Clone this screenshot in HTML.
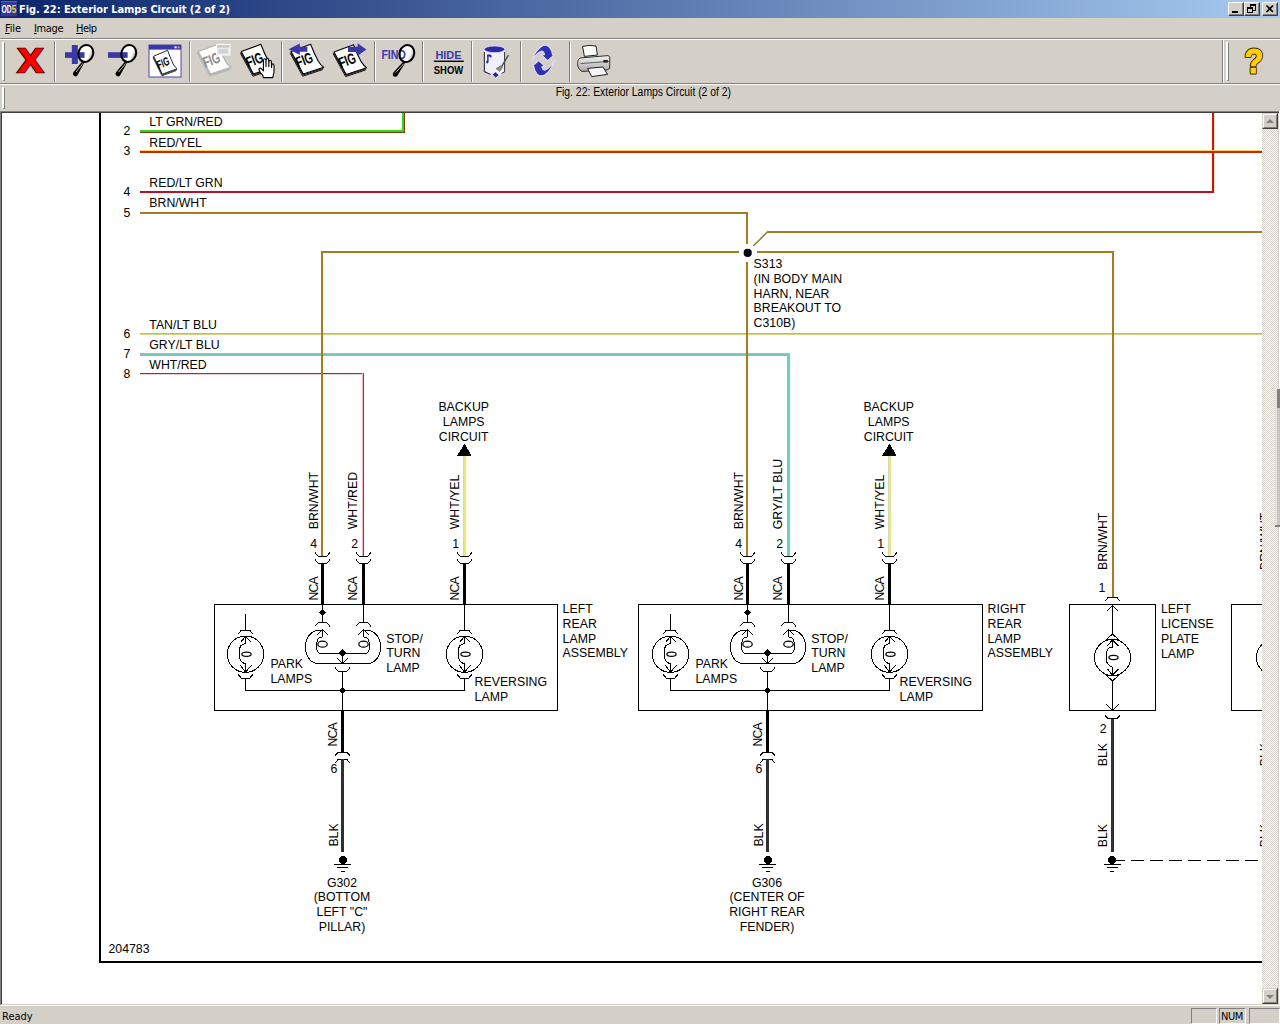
<!DOCTYPE html>
<html lang="en"><head><meta charset="utf-8">
<title>Fig. 22: Exterior Lamps Circuit (2 of 2)</title>
<style>
html,body{margin:0;padding:0;}
body{width:1280px;height:1024px;overflow:hidden;background:#d4d0c8;position:relative;
 font-family:"DejaVu Sans Condensed","DejaVu Sans","Liberation Sans",sans-serif;font-size:11px;color:#000;}
.abs{position:absolute;}
#title{left:0;top:0;width:1280px;height:18px;background:linear-gradient(to right,#0a246a 0%,#a6caf0 100%);}
#title .cap{position:absolute;left:19px;top:2px;height:16px;line-height:16px;color:#fff;font-weight:bold;font-size:11px;white-space:nowrap;letter-spacing:-0.08px;}
.tbtn{position:absolute;top:2px;width:16px;height:14px;background:#d4d0c8;box-sizing:border-box;
 border-top:1px solid #fff;border-left:1px solid #fff;border-right:1px solid #404040;border-bottom:1px solid #404040;}
.tbtn:after{content:"";position:absolute;left:0;top:0;right:0;bottom:0;border-right:1px solid #808080;border-bottom:1px solid #808080;}
#menu{left:0;top:18px;width:1280px;height:20px;}
#menu span{position:absolute;top:4px;letter-spacing:-0.15px;height:14px;line-height:14px;white-space:nowrap;}
#menu u{text-decoration:underline;text-underline-offset:1px;}
.hl{left:0;width:1280px;height:1px;}
.grip{width:3px;box-sizing:border-box;border-top:1px solid #fff;border-left:2px solid #fff;border-right:1px solid #808080;border-bottom:1px solid #808080;}
.sep{width:2px;top:41px;height:41px;box-sizing:border-box;border-left:1px solid #808080;border-right:1px solid #fff;}
#label2{left:0;top:85px;width:1286px;height:14px;line-height:14px;text-align:center;font-family:"Liberation Sans",sans-serif;font-size:12px;white-space:nowrap;}
#label2 span{display:inline-block;transform:scaleX(0.865);}
#content{left:2px;top:113px;width:1260px;height:891px;background:#fff;overflow:hidden;}
#vs{left:1262px;top:113px;width:16px;height:891px;
 background-color:#fff;
 background-image:linear-gradient(45deg,#d4d0c8 25%,transparent 25%,transparent 75%,#d4d0c8 75%),linear-gradient(45deg,#d4d0c8 25%,transparent 25%,transparent 75%,#d4d0c8 75%);
 background-size:2px 2px;background-position:0 0,1px 1px;}
.sbtn{position:absolute;left:0;width:16px;height:16px;background:#d4d0c8;box-sizing:border-box;
 border-top:1px solid #d4d0c8;border-left:1px solid #d4d0c8;border-right:1px solid #404040;border-bottom:1px solid #404040;}
.sbtn:before{content:"";position:absolute;left:0;top:0;right:0;bottom:0;border-top:1px solid #fff;border-left:1px solid #fff;border-right:1px solid #808080;border-bottom:1px solid #808080;}
.sbtn i{position:absolute;left:3px;width:0;height:0;border-left:4px solid transparent;border-right:4px solid transparent;}
#status{left:0;top:1006px;width:1280px;height:18px;}
.pane{position:absolute;top:2px;height:16px;box-sizing:border-box;border-top:1px solid #808080;border-left:1px solid #808080;border-right:1px solid #fff;border-bottom:1px solid #fff;}
svg text{font-family:"Liberation Sans",Arial,sans-serif;fill:#000;}
</style></head>
<body>
<!-- title bar -->
<div id="title" class="abs">
 <svg class="abs" style="left:1px;top:1px" width="16" height="16" viewBox="0 0 16 16"><rect width="16" height="16" fill="#37379a"/><rect x="0" y="0" width="16" height="1" fill="#5c5cc0"/><rect x="0" y="15" width="16" height="1" fill="#26267a"/><text x="0.4" y="12" font-size="10" font-weight="bold" style="fill:#fff" textLength="10.2" lengthAdjust="spacingAndGlyphs">OD</text><text x="10.8" y="12" font-size="10" font-weight="bold" style="fill:#f4d820" textLength="4.6" lengthAdjust="spacingAndGlyphs">5</text></svg>
 <div class="cap">Fig. 22: Exterior Lamps Circuit (2 of 2)</div>
 <div class="tbtn" style="left:1228px"><svg class="abs" style="left:0;top:0" width="14" height="12"><rect x="3" y="8" width="6" height="2" fill="#000"/></svg></div>
 <div class="tbtn" style="left:1244px"><svg class="abs" style="left:0;top:0" width="14" height="12"><rect x="5" y="1" width="6" height="2" fill="#000"/><path d="M5.5 2v3M10.5 2v5.5H8" stroke="#000" fill="none"/><rect x="2" y="4" width="6" height="2" fill="#000"/><rect x="2.5" y="5.5" width="5" height="4" fill="none" stroke="#000"/></svg></div>
 <div class="tbtn" style="left:1262px"><svg class="abs" style="left:0;top:0" width="14" height="12"><path d="M3.5 2.5l6.5 6.5M10 2.5l-6.5 6.5" stroke="#000" stroke-width="1.7" fill="none"/></svg></div>
</div>
<!-- menu -->
<div id="menu" class="abs"><span style="left:5px"><u>F</u>ile</span><span style="left:34px;letter-spacing:-0.35px"><u>I</u>mage</span><span style="left:76px;letter-spacing:-0.5px"><u>H</u>elp</span></div>
<div class="abs hl" style="top:38px;background:#808080"></div><div class="abs hl" style="top:39px;background:#fff"></div>
<!-- toolbar 1 -->
<div class="abs grip" style="left:2px;top:42px;height:39px"></div>
<div class="abs sep" style="left:54px"></div>
<div class="abs sep" style="left:189px"></div>
<div class="abs sep" style="left:281px"></div>
<div class="abs sep" style="left:374px"></div>
<div class="abs sep" style="left:422px"></div>
<div class="abs sep" style="left:471px"></div>
<div class="abs sep" style="left:520px"></div>
<div class="abs sep" style="left:569px"></div>
<div class="abs" style="left:1222px;top:40px;width:1px;height:43px;background:#808080"></div>
<div class="abs" style="left:1223px;top:40px;width:1px;height:43px;background:#fff"></div>
<div class="abs grip" style="left:1226px;top:42px;height:39px"></div>
<svg class="abs" style="left:0;top:40px" width="1280" height="44" viewBox="0 40 1280 44">
<defs><linearGradient id="lg" x1="0" y1="0" x2="1" y2="0"><stop offset="0" stop-color="#fff"/><stop offset="0.7" stop-color="#fff"/><stop offset="1" stop-color="#a8a8a8"/></linearGradient><linearGradient id="pg" x1="0" y1="0" x2="0" y2="1"><stop offset="0" stop-color="#f4f4f4"/><stop offset="1" stop-color="#a8a8a8"/></linearGradient></defs>
<text x="17.9" y="71.5" font-size="33.6" font-weight="bold" style="fill:#300000;stroke:#300000;stroke-width:2.6;stroke-linejoin:miter" textLength="24.8" lengthAdjust="spacingAndGlyphs">X</text>
<text x="17.9" y="71.5" font-size="33.6" font-weight="bold" style="fill:#ff0000;stroke:#ff0000;stroke-width:0.9;stroke-linejoin:miter" textLength="24.8" lengthAdjust="spacingAndGlyphs">X</text>
<ellipse cx="85.8" cy="53.4" rx="7.3" ry="8.6" transform="rotate(20 85.8 53.4)" fill="url(#lg)"/>
<rect x="65" y="52.2" width="19.5" height="5.7" fill="#3a38a8"/><rect x="71.8" y="45" width="6" height="19" fill="#3a38a8"/>
<path d="M82.6 61.0 L84.6 62.0 L77.19999999999999 75.8 Q75.1 77.4 73.0 74.8 Q72.6 73.2 74.0 71.60000000000001 Z" fill="#000"/>
<path d="M82.8 63.4 L75.89999999999999 72.2" stroke="#d0d0d0" stroke-width="0.9" fill="none"/>
<ellipse cx="85.8" cy="53.4" rx="7.3" ry="8.6" transform="rotate(20 85.8 53.4)" fill="none" stroke="#000" stroke-width="2"/>
<ellipse cx="128.7" cy="53.4" rx="7.3" ry="8.6" transform="rotate(20 128.7 53.4)" fill="url(#lg)"/>
<rect x="108" y="52.2" width="19.6" height="5.7" fill="#3a38a8"/>
<path d="M125.49999999999999 61.0 L127.49999999999999 62.0 L119.8 75.8 Q117.7 77.4 115.60000000000001 74.8 Q115.2 73.2 116.60000000000001 71.60000000000001 Z" fill="#000"/>
<path d="M125.69999999999999 63.4 L118.5 72.2" stroke="#d0d0d0" stroke-width="0.9" fill="none"/>
<ellipse cx="128.7" cy="53.4" rx="7.3" ry="8.6" transform="rotate(20 128.7 53.4)" fill="none" stroke="#000" stroke-width="2"/>
<rect x="149" y="45" width="32" height="32" fill="#fff" stroke="#4846ae" stroke-width="1"/><rect x="149" y="45" width="32" height="4.6" fill="#3a38a8"/><rect x="174.6" y="46.3" width="2" height="2" fill="#fff"/><rect x="177.6" y="46.3" width="2" height="2" fill="#f08090"/>
<g transform="translate(153.6 56.2) scale(0.72 0.8)">
<g transform="translate(0 0)">
<path d="M-0.9 1.6 L11.6 24.6 L31.6 18" fill="none" stroke="#000" stroke-width="0.9"/>
<path d="M-0.5 0.8 L12 23.4 L32.2 16.8" fill="none" stroke="#000" stroke-width="0.9"/>
<path d="M0 0 L19.5 -7.3 Q23.5 3 27.3 9.9 Q30 14 32.6 15.7 L12.2 22.4 Z" fill="#fff" stroke="#000" stroke-width="1.1" stroke-linejoin="round"/>
<text transform="translate(6.9 16.2) rotate(-20.5) scale(0.76 1.1)" font-size="13.6" font-weight="bold" style="fill:#000">FIG</text>
</g>
</g>
<g transform="translate(198.3 51.6)">
<path d="M-0.9 1.6 L11.6 24.6 L31.6 18" fill="none" stroke="#b0b0b0" stroke-width="0.9"/>
<path d="M-0.5 0.8 L12 23.4 L32.2 16.8" fill="none" stroke="#b0b0b0" stroke-width="0.9"/>
<path d="M0 0 L19.5 -7.3 Q23.5 3 27.3 9.9 Q30 14 32.6 15.7 L12.2 22.4 Z" fill="#fdfdfd" stroke="#b0b0b0" stroke-width="1.1" stroke-linejoin="round"/>
<text transform="translate(6.9 16.2) rotate(-20.5) scale(0.76 1.1)" font-size="13.6" font-weight="bold" style="fill:#8c8c8c">FIG</text>
</g>
<rect x="216.5" y="44.5" width="13.5" height="10.5" fill="#e8e8e8" stroke="#fff" stroke-width="1"/><rect x="217" y="45" width="12.5" height="2.6" fill="#c8c8c8"/><rect x="218.5" y="49" width="9.5" height="4.6" fill="#d4d4d4"/>
<g transform="translate(241.3 51.6)">
<path d="M-0.9 1.6 L11.6 24.6 L31.6 18" fill="none" stroke="#000" stroke-width="0.9"/>
<path d="M-0.5 0.8 L12 23.4 L32.2 16.8" fill="none" stroke="#000" stroke-width="0.9"/>
<path d="M0 0 L19.5 -7.3 Q23.5 3 27.3 9.9 Q30 14 32.6 15.7 L12.2 22.4 Z" fill="#fff" stroke="#000" stroke-width="1.1" stroke-linejoin="round"/>
<text transform="translate(6.9 16.2) rotate(-20.5) scale(0.76 1.1)" font-size="13.6" font-weight="bold" style="fill:#000">FIG</text>
</g>
<path d="M263.4 77.6 L262.8 75.4 L260.4 72.6 Q258.4 70 259.2 68.6 Q260.2 67.6 261.6 68.8 L263.4 70.8 L263.4 60.6 Q263.6 58.8 264.7 58.8 Q265.8 58.8 265.9 60.6 L266 66.4 L266.1 60 Q266.4 58.4 267.4 58.4 Q268.5 58.4 268.7 60 L268.8 66.6 L269 61.6 Q269.3 60.2 270.2 60.2 Q271.2 60.2 271.4 61.6 L271.5 67.6 L271.8 65 Q272.1 63.8 272.9 63.8 Q273.9 63.9 274 65.2 L274 72.4 L272.7 77.6 Z" fill="#fff" stroke="#000" stroke-width="1.1" stroke-linejoin="round"/>
<g transform="translate(291.1 51.6)">
<path d="M-0.9 1.6 L11.6 24.6 L31.6 18" fill="none" stroke="#000" stroke-width="0.9"/>
<path d="M-0.5 0.8 L12 23.4 L32.2 16.8" fill="none" stroke="#000" stroke-width="0.9"/>
<path d="M0 0 L19.5 -7.3 Q23.5 3 27.3 9.9 Q30 14 32.6 15.7 L12.2 22.4 Z" fill="#fff" stroke="#000" stroke-width="1.1" stroke-linejoin="round"/>
<text transform="translate(6.9 16.2) rotate(-20.5) scale(0.76 1.1)" font-size="13.6" font-weight="bold" style="fill:#000">FIG</text>
</g>
<path d="M288.6 49.3 L299.8 43.6 L299.8 46.8 L307.4 46.8 L307.4 51.7 L299.8 51.7 L299.8 55 Z" fill="#3a38a8"/>
<g transform="translate(334 52)">
<path d="M-0.9 1.6 L11.6 24.6 L31.6 18" fill="none" stroke="#000" stroke-width="0.9"/>
<path d="M-0.5 0.8 L12 23.4 L32.2 16.8" fill="none" stroke="#000" stroke-width="0.9"/>
<path d="M0 0 L19.5 -7.3 Q23.5 3 27.3 9.9 Q30 14 32.6 15.7 L12.2 22.4 Z" fill="#fff" stroke="#000" stroke-width="1.1" stroke-linejoin="round"/>
<text transform="translate(6.9 16.2) rotate(-20.5) scale(0.76 1.1)" font-size="13.6" font-weight="bold" style="fill:#000">FIG</text>
</g>
<path d="M366.4 49.6 L357.6 43.2 L357.6 46.8 L348 46.8 L348 52 L357.6 52 L357.6 55.8 Z" fill="#3a38a8"/>
<ellipse cx="406.8" cy="53.6" rx="7.3" ry="8.6" transform="rotate(20 406.8 53.6)" fill="url(#lg)"/>
<text x="381.4" y="58.8" font-size="12.2" font-weight="bold" style="fill:#3a38a8" textLength="24.6" lengthAdjust="spacingAndGlyphs">FIND</text>
<path d="M403.6 61.2 L405.6 62.2 L397.0 76.19999999999999 Q394.9 77.8 392.79999999999995 75.19999999999999 Q392.4 73.6 393.79999999999995 72.0 Z" fill="#000"/>
<path d="M403.8 63.6 L395.7 72.6" stroke="#d0d0d0" stroke-width="0.9" fill="none"/>
<ellipse cx="406.8" cy="53.6" rx="7.3" ry="8.6" transform="rotate(20 406.8 53.6)" fill="none" stroke="#000" stroke-width="2"/>
<text x="435.4" y="58.8" font-size="11.6" font-weight="bold" style="fill:#3a38a8" textLength="26" lengthAdjust="spacingAndGlyphs">HIDE</text>
<rect x="433.8" y="60.6" width="30" height="1.4" fill="#000"/>
<text x="433.8" y="73.5" font-size="11.4" font-weight="bold" textLength="29.4" lengthAdjust="spacingAndGlyphs">SHOW</text>
<path d="M484.3 50 L484.3 71.4 Q488 75.6 494.5 75.6 Q501 75.6 504.7 71.4 L504.7 50 Z" fill="#f0f0fb" stroke="none"/>
<path d="M484.4 52 L484.4 71.6 L490.6 74.4" fill="none" stroke="#303038" stroke-width="1.1"/>
<path d="M504.6 52 L504.6 71.8 L501.6 73.4" fill="none" stroke="#303038" stroke-width="1"/>
<ellipse cx="494.5" cy="49.3" rx="10.4" ry="3.4" fill="#2a2aa8" stroke="#dcdcf6" stroke-width="0.9"/>
<path d="M487 54.4 L490.4 54.4 Q492 55 491.6 57.4 L490 57.2 L489.6 56.4 L488.6 56.4 L488.6 61.4 Q488.4 63.6 487 63.4 Q485.8 63 486.2 61.4 Q486.6 60.4 487.2 60.2 Z" fill="#2a2aa8"/>
<path d="M508.4 55.2 L501.4 66.8" stroke="#505058" stroke-width="1.5" fill="none"/>
<path d="M501 65.6 L502.6 67.6 L499.6 71.4 L496 68.6 Z" fill="#8c8c84" stroke="#606060" stroke-width="0.5"/>
<path d="M495.5 71.8 L499.3 75.2 L495.5 78.2 L492 74.2 Z" fill="#2a2aa0" stroke="#f0f0fc" stroke-width="1"/>
<g transform="rotate(0 543.2 60.6)"><path d="M531.6 61.4 Q535 50.6 541.4 46.4 Q546.2 43.6 549.6 47.4 Q552.2 50.6 552.6 54.6 L554 55.2 L547.6 60.6 L541.4 55 L544.4 54.6 Q544.2 51.6 541.6 51 Q536.6 52.6 531.6 61.4 Z" fill="#3030b4" stroke="#dcdcf4" stroke-width="1.2" stroke-linejoin="round"/></g>
<g transform="rotate(180 543.2 60.6)"><path d="M531.6 61.4 Q535 50.6 541.4 46.4 Q546.2 43.6 549.6 47.4 Q552.2 50.6 552.6 54.6 L554 55.2 L547.6 60.6 L541.4 55 L544.4 54.6 Q544.2 51.6 541.6 51 Q536.6 52.6 531.6 61.4 Z" fill="#3030b4" stroke="#dcdcf4" stroke-width="1.2" stroke-linejoin="round"/></g>
<path d="M582.6 46.4 Q589 44.6 596 46 L597.4 55 L584.4 56.4 Z" fill="#fdfdfd" stroke="#202020" stroke-width="1"/>
<path d="M580 58 L608 55.6 Q610 56 609.8 58 L609.6 68.6 L607 70 L582 71.4 Q577.6 69 577.6 63.6 Q577.6 59.6 580 58 Z" fill="url(#pg)" stroke="#303030" stroke-width="1"/>
<path d="M580.4 63.6 L609.6 61.4" stroke="#505050" stroke-width="0.9" fill="none"/>
<rect x="603.4" y="60" width="4.4" height="2.6" fill="#202020"/>
<path d="M587.6 68.4 L603 67 L607.6 74.4 L591.6 76.6 Z" fill="#f4f4f4" stroke="#202020" stroke-width="1"/>
<text x="1244.6" y="72.7" font-size="34.6" font-weight="bold" style="fill:#3c2200;stroke:#3c2200;stroke-width:3.2;stroke-linejoin:round" textLength="18.8" lengthAdjust="spacingAndGlyphs">?</text>
<text x="1244.6" y="72.7" font-size="34.6" font-weight="bold" style="fill:#ffd200;stroke:#ffd200;stroke-width:1.1;stroke-linejoin:round" textLength="18.8" lengthAdjust="spacingAndGlyphs">?</text>
</svg>
<div class="abs hl" style="top:83px;background:#808080"></div><div class="abs hl" style="top:84px;background:#fff"></div>
<!-- toolbar 2 -->
<div class="abs grip" style="left:2px;top:87px;height:22px"></div>
<div id="label2" class="abs"><span>Fig. 22: Exterior Lamps Circuit (2 of 2)</span></div>
<!-- content border -->
<div class="abs" style="left:0;top:111px;width:1280px;height:1px;background:#808080"></div>
<div class="abs" style="left:1px;top:112px;width:1278px;height:1px;background:#404040"></div>
<div class="abs" style="left:0;top:111px;width:1px;height:894px;background:#808080"></div>
<div class="abs" style="left:1px;top:112px;width:1px;height:892px;background:#404040"></div>
<div class="abs" style="left:1278px;top:113px;width:1px;height:892px;background:#d4d0c8"></div>
<div class="abs" style="left:1279px;top:111px;width:1px;height:895px;background:#fff"></div>
<div class="abs" style="left:1px;top:1004px;width:1278px;height:1px;background:#d4d0c8"></div>
<div class="abs" style="left:0;top:1005px;width:1280px;height:1px;background:#fff"></div>
<div id="content" class="abs">
<svg width="1260" height="891" viewBox="2 113 1260 891" style="position:absolute;left:0;top:0" shape-rendering="crispEdges">
<rect x="99" y="113" width="2" height="850" fill="#000"/>
<rect x="99" y="961" width="1170" height="2" fill="#000"/>
<rect x="140" y="130" width="265" height="2" fill="#2ed81e"/>
<rect x="140" y="132" width="265" height="1" fill="#7a3c04"/>
<rect x="402" y="112" width="2" height="20" fill="#2ed81e"/>
<rect x="404" y="112" width="1" height="20" fill="#7a3c04"/>
<rect x="140" y="191" width="1074" height="2" fill="#b81226"/>
<rect x="1212" y="112" width="2" height="81" fill="#d80c0c"/>
<rect x="1214" y="112" width="1" height="81" fill="#b8f0c0"/>
<rect x="140" y="150" width="1122" height="1" fill="#ffd468"/>
<rect x="140" y="151" width="1122" height="2" fill="#c82606"/>
<rect x="140" y="212" width="608" height="2" fill="#a67c1e"/>
<rect x="321" y="251" width="793" height="2" fill="#a67c1e"/>
<path d="M753.4 246 L767.6 231.8" stroke="#8e7c34" stroke-width="1.5" fill="none" shape-rendering="geometricPrecision"/>
<rect x="767" y="231" width="495" height="2" fill="#a67c1e"/>
<rect x="140" y="333" width="1122" height="1" fill="#58dcd2"/>
<rect x="140" y="334" width="1122" height="1" fill="#cfd67e"/>
<rect x="140" y="353" width="650" height="1" fill="#66d6ca"/>
<rect x="140" y="354" width="650" height="1" fill="#7cc6c4"/>
<rect x="140" y="355" width="650" height="1" fill="#a2a8c0"/>
<rect x="787" y="353" width="1" height="203" fill="#8cc0c0"/>
<rect x="788" y="353" width="2" height="203" fill="#60d4c8"/>
<rect x="140" y="373" width="224" height="1" fill="#a82838"/>
<rect x="140" y="374" width="224" height="1" fill="#ecd0d8"/>
<rect x="362" y="373" width="1" height="183" fill="#ffb4bc"/>
<rect x="363" y="373" width="1" height="183" fill="#a42c3c"/>
<rect x="321" y="251" width="2" height="305" fill="#a67c1e"/>
<rect x="746" y="212" width="2" height="344" fill="#a67c1e"/>
<rect x="1112" y="251" width="2" height="346" fill="#a67c1e"/>
<circle cx="747.7" cy="252.9" r="9.2" fill="#fff"/>
<circle cx="747.7" cy="252.9" r="4.1" fill="#000014" shape-rendering="geometricPrecision"/>
<text x="123.5" y="135.2" font-size="12.3" text-anchor="start" >2</text>
<text x="123.5" y="155.3" font-size="12.3" text-anchor="start" >3</text>
<text x="123.5" y="196.3" font-size="12.3" text-anchor="start" >4</text>
<text x="123.5" y="216.6" font-size="12.3" text-anchor="start" >5</text>
<text x="123.5" y="338" font-size="12.3" text-anchor="start" >6</text>
<text x="123.5" y="358" font-size="12.3" text-anchor="start" >7</text>
<text x="123.5" y="378.2" font-size="12.3" text-anchor="start" >8</text>
<text x="149.3" y="125.5" font-size="12.3" text-anchor="start" >LT GRN/RED</text>
<text x="149.3" y="146.5" font-size="12.3" text-anchor="start" >RED/YEL</text>
<text x="149.3" y="186.6" font-size="12.3" text-anchor="start" >RED/LT GRN</text>
<text x="149.3" y="206.6" font-size="12.3" text-anchor="start" >BRN/WHT</text>
<text x="149.3" y="328.7" font-size="12.3" text-anchor="start" >TAN/LT BLU</text>
<text x="149.3" y="348.7" font-size="12.3" text-anchor="start" >GRY/LT BLU</text>
<text x="149.3" y="368.7" font-size="12.3" text-anchor="start" >WHT/RED</text>
<text x="753.6" y="268" font-size="12.3" text-anchor="start" >S313</text>
<text x="753.6" y="282.78" font-size="12.3" text-anchor="start" >(IN BODY MAIN</text>
<text x="753.6" y="297.56" font-size="12.3" text-anchor="start" >HARN, NEAR</text>
<text x="753.6" y="312.34" font-size="12.3" text-anchor="start" >BREAKOUT TO</text>
<text x="753.6" y="327.12" font-size="12.3" text-anchor="start" >C310B)</text>
<rect x="214.5" y="604.5" width="343" height="106" fill="none" stroke="#000"/>
<path d="M315.1 552.7 L318.3 556.3 L326.7 556.3 L329.9 552.7" stroke="#000" stroke-width="1" fill="none" />
<path d="M315.1 559.8 L318.3 563.4 L326.7 563.4 L329.9 559.8" stroke="#000" stroke-width="1" fill="none" />
<rect x="321" y="563.4" width="3" height="41" fill="#000"/>
<text transform="translate(317.5 600.6) rotate(-90)" font-size="12.3" letter-spacing="-0.8">NCA</text>
<text transform="translate(317.5 529.3) rotate(-90)" font-size="12.3">BRN/WHT</text>
<text x="317.2" y="547.5" font-size="12.3" text-anchor="end" >4</text>
<path d="M356.1 552.7 L359.3 556.3 L367.7 556.3 L370.9 552.7" stroke="#000" stroke-width="1" fill="none" />
<path d="M356.1 559.8 L359.3 563.4 L367.7 563.4 L370.9 559.8" stroke="#000" stroke-width="1" fill="none" />
<rect x="362" y="563.4" width="3" height="41" fill="#000"/>
<text transform="translate(357.3 600.6) rotate(-90)" font-size="12.3" letter-spacing="-0.8">NCA</text>
<text transform="translate(357.3 529.3) rotate(-90)" font-size="12.3">WHT/RED</text>
<text x="358.2" y="547.5" font-size="12.3" text-anchor="end" >2</text>
<path d="M457.1 552.7 L460.3 556.3 L468.7 556.3 L471.9 552.7" stroke="#000" stroke-width="1" fill="none" />
<path d="M457.1 559.8 L460.3 563.4 L468.7 563.4 L471.9 559.8" stroke="#000" stroke-width="1" fill="none" />
<rect x="463" y="563.4" width="3" height="41" fill="#000"/>
<text transform="translate(458.9 600.6) rotate(-90)" font-size="12.3" letter-spacing="-0.8">NCA</text>
<text transform="translate(458.9 529.3) rotate(-90)" font-size="12.3">WHT/YEL</text>
<text x="459.2" y="547.5" font-size="12.3" text-anchor="end" >1</text>
<rect x="463" y="455" width="1" height="101" fill="#d6d9b0"/>
<rect x="464" y="455" width="2" height="101" fill="#e6e982"/>
<rect x="466" y="455" width="1" height="101" fill="#fdfdd8"/>
<path d="M464.5 443.6 L471.5 455.5 L457.3 455.5 Z" fill="#000"/>
<text x="463.7" y="410.8" font-size="12.3" text-anchor="middle" >BACKUP</text>
<text x="463.7" y="425.7" font-size="12.3" text-anchor="middle" >LAMPS</text>
<text x="463.7" y="440.6" font-size="12.3" text-anchor="middle" >CIRCUIT</text>
<line x1="245.5" y1="614.2" x2="245.5" y2="630.3" stroke="#000" stroke-width="1" />
<circle cx="245.5" cy="654.2" r="18.2" fill="none" stroke="#000"/>
<path d="M240.5 642.5 L245.5 636.5 L251.3 642.5" stroke="#000" stroke-width="1" fill="none" />
<path d="M245.5 636.5 L245.5 643.8 C241.5 643.8 239.5 646.2 239.5 650.7 L239.5 656.7 C239.5 661.2 242 662.6 245.5 664 L245.5 672" stroke="#000" stroke-width="1" fill="none" />
<path d="M240.5 665.5 L245.5 672 L251.5 665.5" stroke="#000" stroke-width="1" fill="none" />
<ellipse cx="246.5" cy="654.2" rx="4.6" ry="2.1" fill="none" stroke="#000" stroke-width="1.25" shape-rendering="geometricPrecision"/>
<path d="M238.1 633.9 L241.3 630.3 L249.7 630.3 L252.9 633.9" stroke="#000" stroke-width="1" fill="none" />
<path d="M238.1 674.5 L241.3 678.1 L249.7 678.1 L252.9 674.5" stroke="#000" stroke-width="1" fill="none" />
<path d="M245.5 678.1 L245.5 690.4 L464.5 690.4 L464.5 678.1" stroke="#000" stroke-width="1" fill="none" />
<line x1="464.5" y1="604.5" x2="464.5" y2="630.3" stroke="#000" stroke-width="1" />
<circle cx="464.5" cy="654.2" r="18.2" fill="none" stroke="#000"/>
<path d="M459.5 642.5 L464.5 636.5 L470.3 642.5" stroke="#000" stroke-width="1" fill="none" />
<path d="M464.5 636.5 L464.5 643.8 C460.5 643.8 458.5 646.2 458.5 650.7 L458.5 656.7 C458.5 661.2 461 662.6 464.5 664 L464.5 672" stroke="#000" stroke-width="1" fill="none" />
<path d="M459.5 665.5 L464.5 672 L470.5 665.5" stroke="#000" stroke-width="1" fill="none" />
<ellipse cx="465.5" cy="654.2" rx="4.6" ry="2.1" fill="none" stroke="#000" stroke-width="1.25" shape-rendering="geometricPrecision"/>
<path d="M457.1 633.9 L460.3 630.3 L468.7 630.3 L471.9 633.9" stroke="#000" stroke-width="1" fill="none" />
<path d="M457.1 674.5 L460.3 678.1 L468.7 678.1 L471.9 674.5" stroke="#000" stroke-width="1" fill="none" />
<line x1="322.5" y1="604.5" x2="322.5" y2="622.6" stroke="#000" stroke-width="1" />
<path d="M319 612.8 L322.5 609.3 L326 612.8 L322.5 616.3 Z" fill="#000"/>
<line x1="363.5" y1="604.5" x2="363.5" y2="622.6" stroke="#000" stroke-width="1" />
<path d="M315.1 626.2 L318.3 622.6 L326.7 622.6 L329.9 626.2" stroke="#000" stroke-width="1" fill="none" />
<path d="M356.1 626.2 L359.3 622.6 L367.7 622.6 L370.9 626.2" stroke="#000" stroke-width="1" fill="none" />
<path d="M316.7 635.4 L322.5 629.3 L328.3 635.4" stroke="#000" stroke-width="1" fill="none" />
<path d="M357.7 635.4 L363.5 629.3 L369.3 635.4" stroke="#000" stroke-width="1" fill="none" />
<path d="M322.5 629.3 L322.5 637 Q316.9 637.5 316.9 642.5 L316.9 649 Q316.9 653.4 321.5 653.4 L342.5 653.4" stroke="#000" stroke-width="1" fill="none" />
<path d="M363.5 629.3 L363.5 637 Q369.1 637.5 369.1 642.5 L369.1 649 Q369.1 653.4 364.5 653.4 L342.5 653.4" stroke="#000" stroke-width="1" fill="none" />
<ellipse cx="322.5" cy="644.2" rx="4.7" ry="3" fill="none" stroke="#000" stroke-width="1.25" shape-rendering="geometricPrecision"/>
<ellipse cx="363.5" cy="644.2" rx="4.7" ry="3" fill="none" stroke="#000" stroke-width="1.25" shape-rendering="geometricPrecision"/>
<path d="M321 630 C310.5 630 305.3 638 305.3 647 C305.3 657 311.5 663.5 318.5 663.5 L367.5 663.5 C374.5 663.5 380.7 657 380.7 647 C380.7 638 375.5 630 365 630" stroke="#000" stroke-width="1" fill="none" />
<path d="M338.5 653.4 L342.5 649.4 L346.5 653.4 L342.5 657.4 Z" fill="#000"/>
<line x1="342.5" y1="653.4" x2="342.5" y2="663.5" stroke="#000" stroke-width="1" />
<path d="M336.9 658.2 L342.5 663.5 L348.1 658.2" stroke="#000" stroke-width="1" fill="none" />
<path d="M335.1 667.8 L338.3 671.4 L346.7 671.4 L349.9 667.8" stroke="#000" stroke-width="1" fill="none" />
<line x1="342.5" y1="671.4" x2="342.5" y2="710.5" stroke="#000" stroke-width="1" />
<path d="M338.7 690.5 L342.5 686.7 L346.3 690.5 L342.5 694.3 Z" fill="#000"/>
<rect x="341" y="710.5" width="3" height="41.5" fill="#000"/>
<path d="M335.1 755.6 L338.3 752 L346.7 752 L349.9 755.6" stroke="#000" stroke-width="1" fill="none" />
<path d="M335.1 762.9 L338.3 759.3 L346.7 759.3 L349.9 762.9" stroke="#000" stroke-width="1" fill="none" />
<rect x="341" y="759.3" width="3" height="92.7" fill="#303030"/>
<text transform="translate(337.4 746.6) rotate(-90)" font-size="12.3" letter-spacing="-0.8">NCA</text>
<text transform="translate(337.6 846.6) rotate(-90)" font-size="12.3">BLK</text>
<text x="330.6" y="772.6" font-size="12.3" text-anchor="start" >6</text>
<circle cx="343" cy="860" r="4.15" fill="#000"/>
<line x1="334" y1="864.5" x2="351" y2="864.5" stroke="#000" stroke-width="1" />
<line x1="337" y1="867.5" x2="348" y2="867.5" stroke="#000" stroke-width="1" />
<line x1="341" y1="871.5" x2="345" y2="871.5" stroke="#000" stroke-width="1" />
<text x="342" y="886.5" font-size="12.3" text-anchor="middle" >G302</text>
<text x="342" y="901.2" font-size="12.3" text-anchor="middle" >(BOTTOM</text>
<text x="342" y="915.9" font-size="12.3" text-anchor="middle" >LEFT &quot;C&quot;</text>
<text x="342" y="930.6" font-size="12.3" text-anchor="middle" >PILLAR)</text>
<text x="270.5" y="667.5" font-size="12.3" text-anchor="start" >PARK</text>
<text x="270.5" y="682.5" font-size="12.3" text-anchor="start" >LAMPS</text>
<text x="386.3" y="642.5" font-size="12.3" text-anchor="start" >STOP/</text>
<text x="386.3" y="657.3" font-size="12.3" text-anchor="start" >TURN</text>
<text x="386.3" y="672" font-size="12.3" text-anchor="start" >LAMP</text>
<text x="474.6" y="686.2" font-size="12.3" text-anchor="start" >REVERSING</text>
<text x="474.6" y="701.4" font-size="12.3" text-anchor="start" >LAMP</text>
<rect x="638.5" y="604.5" width="344" height="106" fill="none" stroke="#000"/>
<path d="M740.1 552.7 L743.3 556.3 L751.7 556.3 L754.9 552.7" stroke="#000" stroke-width="1" fill="none" />
<path d="M740.1 559.8 L743.3 563.4 L751.7 563.4 L754.9 559.8" stroke="#000" stroke-width="1" fill="none" />
<rect x="746" y="563.4" width="3" height="41" fill="#000"/>
<text transform="translate(742.5 600.6) rotate(-90)" font-size="12.3" letter-spacing="-0.8">NCA</text>
<text transform="translate(742.5 529.3) rotate(-90)" font-size="12.3">BRN/WHT</text>
<text x="742.2" y="547.5" font-size="12.3" text-anchor="end" >4</text>
<path d="M781.1 552.7 L784.3 556.3 L792.7 556.3 L795.9 552.7" stroke="#000" stroke-width="1" fill="none" />
<path d="M781.1 559.8 L784.3 563.4 L792.7 563.4 L795.9 559.8" stroke="#000" stroke-width="1" fill="none" />
<rect x="787" y="563.4" width="3" height="41" fill="#000"/>
<text transform="translate(782.3 600.6) rotate(-90)" font-size="12.3" letter-spacing="-0.8">NCA</text>
<text transform="translate(782.3 529.3) rotate(-90)" font-size="12.3">GRY/LT BLU</text>
<text x="783.2" y="547.5" font-size="12.3" text-anchor="end" >2</text>
<path d="M882.1 552.7 L885.3 556.3 L893.7 556.3 L896.9 552.7" stroke="#000" stroke-width="1" fill="none" />
<path d="M882.1 559.8 L885.3 563.4 L893.7 563.4 L896.9 559.8" stroke="#000" stroke-width="1" fill="none" />
<rect x="888" y="563.4" width="3" height="41" fill="#000"/>
<text transform="translate(883.9 600.6) rotate(-90)" font-size="12.3" letter-spacing="-0.8">NCA</text>
<text transform="translate(883.9 529.3) rotate(-90)" font-size="12.3">WHT/YEL</text>
<text x="884.2" y="547.5" font-size="12.3" text-anchor="end" >1</text>
<rect x="888" y="455" width="1" height="101" fill="#d6d9b0"/>
<rect x="889" y="455" width="2" height="101" fill="#e6e982"/>
<rect x="891" y="455" width="1" height="101" fill="#fdfdd8"/>
<path d="M889.5 443.6 L896.5 455.5 L882.3 455.5 Z" fill="#000"/>
<text x="888.7" y="410.8" font-size="12.3" text-anchor="middle" >BACKUP</text>
<text x="888.7" y="425.7" font-size="12.3" text-anchor="middle" >LAMPS</text>
<text x="888.7" y="440.6" font-size="12.3" text-anchor="middle" >CIRCUIT</text>
<line x1="670.5" y1="614.2" x2="670.5" y2="630.3" stroke="#000" stroke-width="1" />
<circle cx="670.5" cy="654.2" r="18.2" fill="none" stroke="#000"/>
<path d="M665.5 642.5 L670.5 636.5 L676.3 642.5" stroke="#000" stroke-width="1" fill="none" />
<path d="M670.5 636.5 L670.5 643.8 C666.5 643.8 664.5 646.2 664.5 650.7 L664.5 656.7 C664.5 661.2 667 662.6 670.5 664 L670.5 672" stroke="#000" stroke-width="1" fill="none" />
<path d="M665.5 665.5 L670.5 672 L676.5 665.5" stroke="#000" stroke-width="1" fill="none" />
<ellipse cx="671.5" cy="654.2" rx="4.6" ry="2.1" fill="none" stroke="#000" stroke-width="1.25" shape-rendering="geometricPrecision"/>
<path d="M663.1 633.9 L666.3 630.3 L674.7 630.3 L677.9 633.9" stroke="#000" stroke-width="1" fill="none" />
<path d="M663.1 674.5 L666.3 678.1 L674.7 678.1 L677.9 674.5" stroke="#000" stroke-width="1" fill="none" />
<path d="M670.5 678.1 L670.5 690.4 L889.5 690.4 L889.5 678.1" stroke="#000" stroke-width="1" fill="none" />
<line x1="889.5" y1="604.5" x2="889.5" y2="630.3" stroke="#000" stroke-width="1" />
<circle cx="889.5" cy="654.2" r="18.2" fill="none" stroke="#000"/>
<path d="M884.5 642.5 L889.5 636.5 L895.3 642.5" stroke="#000" stroke-width="1" fill="none" />
<path d="M889.5 636.5 L889.5 643.8 C885.5 643.8 883.5 646.2 883.5 650.7 L883.5 656.7 C883.5 661.2 886 662.6 889.5 664 L889.5 672" stroke="#000" stroke-width="1" fill="none" />
<path d="M884.5 665.5 L889.5 672 L895.5 665.5" stroke="#000" stroke-width="1" fill="none" />
<ellipse cx="890.5" cy="654.2" rx="4.6" ry="2.1" fill="none" stroke="#000" stroke-width="1.25" shape-rendering="geometricPrecision"/>
<path d="M882.1 633.9 L885.3 630.3 L893.7 630.3 L896.9 633.9" stroke="#000" stroke-width="1" fill="none" />
<path d="M882.1 674.5 L885.3 678.1 L893.7 678.1 L896.9 674.5" stroke="#000" stroke-width="1" fill="none" />
<line x1="747.5" y1="604.5" x2="747.5" y2="622.6" stroke="#000" stroke-width="1" />
<path d="M744 612.8 L747.5 609.3 L751 612.8 L747.5 616.3 Z" fill="#000"/>
<line x1="788.5" y1="604.5" x2="788.5" y2="622.6" stroke="#000" stroke-width="1" />
<path d="M740.1 626.2 L743.3 622.6 L751.7 622.6 L754.9 626.2" stroke="#000" stroke-width="1" fill="none" />
<path d="M781.1 626.2 L784.3 622.6 L792.7 622.6 L795.9 626.2" stroke="#000" stroke-width="1" fill="none" />
<path d="M741.7 635.4 L747.5 629.3 L753.3 635.4" stroke="#000" stroke-width="1" fill="none" />
<path d="M782.7 635.4 L788.5 629.3 L794.3 635.4" stroke="#000" stroke-width="1" fill="none" />
<path d="M747.5 629.3 L747.5 637 Q741.9 637.5 741.9 642.5 L741.9 649 Q741.9 653.4 746.5 653.4 L767.5 653.4" stroke="#000" stroke-width="1" fill="none" />
<path d="M788.5 629.3 L788.5 637 Q794.1 637.5 794.1 642.5 L794.1 649 Q794.1 653.4 789.5 653.4 L767.5 653.4" stroke="#000" stroke-width="1" fill="none" />
<ellipse cx="747.5" cy="644.2" rx="4.7" ry="3" fill="none" stroke="#000" stroke-width="1.25" shape-rendering="geometricPrecision"/>
<ellipse cx="788.5" cy="644.2" rx="4.7" ry="3" fill="none" stroke="#000" stroke-width="1.25" shape-rendering="geometricPrecision"/>
<path d="M746 630 C735.5 630 730.3 638 730.3 647 C730.3 657 736.5 663.5 743.5 663.5 L792.5 663.5 C799.5 663.5 805.7 657 805.7 647 C805.7 638 800.5 630 790 630" stroke="#000" stroke-width="1" fill="none" />
<path d="M763.5 653.4 L767.5 649.4 L771.5 653.4 L767.5 657.4 Z" fill="#000"/>
<line x1="767.5" y1="653.4" x2="767.5" y2="663.5" stroke="#000" stroke-width="1" />
<path d="M761.9 658.2 L767.5 663.5 L773.1 658.2" stroke="#000" stroke-width="1" fill="none" />
<path d="M760.1 667.8 L763.3 671.4 L771.7 671.4 L774.9 667.8" stroke="#000" stroke-width="1" fill="none" />
<line x1="767.5" y1="671.4" x2="767.5" y2="710.5" stroke="#000" stroke-width="1" />
<path d="M763.7 690.5 L767.5 686.7 L771.3 690.5 L767.5 694.3 Z" fill="#000"/>
<rect x="766" y="710.5" width="3" height="41.5" fill="#000"/>
<path d="M760.1 755.6 L763.3 752 L771.7 752 L774.9 755.6" stroke="#000" stroke-width="1" fill="none" />
<path d="M760.1 762.9 L763.3 759.3 L771.7 759.3 L774.9 762.9" stroke="#000" stroke-width="1" fill="none" />
<rect x="766" y="759.3" width="3" height="92.7" fill="#303030"/>
<text transform="translate(762.4 746.6) rotate(-90)" font-size="12.3" letter-spacing="-0.8">NCA</text>
<text transform="translate(762.6 846.6) rotate(-90)" font-size="12.3">BLK</text>
<text x="755.6" y="772.6" font-size="12.3" text-anchor="start" >6</text>
<circle cx="768" cy="860" r="4.15" fill="#000"/>
<line x1="759" y1="864.5" x2="776" y2="864.5" stroke="#000" stroke-width="1" />
<line x1="762" y1="867.5" x2="773" y2="867.5" stroke="#000" stroke-width="1" />
<line x1="766" y1="871.5" x2="770" y2="871.5" stroke="#000" stroke-width="1" />
<text x="767" y="886.5" font-size="12.3" text-anchor="middle" >G306</text>
<text x="767" y="901.2" font-size="12.3" text-anchor="middle" >(CENTER OF</text>
<text x="767" y="915.9" font-size="12.3" text-anchor="middle" >RIGHT REAR</text>
<text x="767" y="930.6" font-size="12.3" text-anchor="middle" >FENDER)</text>
<text x="695.5" y="667.5" font-size="12.3" text-anchor="start" >PARK</text>
<text x="695.5" y="682.5" font-size="12.3" text-anchor="start" >LAMPS</text>
<text x="811.3" y="642.5" font-size="12.3" text-anchor="start" >STOP/</text>
<text x="811.3" y="657.3" font-size="12.3" text-anchor="start" >TURN</text>
<text x="811.3" y="672" font-size="12.3" text-anchor="start" >LAMP</text>
<text x="899.6" y="686.2" font-size="12.3" text-anchor="start" >REVERSING</text>
<text x="899.6" y="701.4" font-size="12.3" text-anchor="start" >LAMP</text>
<text x="562.6" y="613.4" font-size="12.3" text-anchor="start" >LEFT</text>
<text x="562.6" y="628" font-size="12.3" text-anchor="start" >REAR</text>
<text x="562.6" y="642.6" font-size="12.3" text-anchor="start" >LAMP</text>
<text x="562.6" y="657.2" font-size="12.3" text-anchor="start" >ASSEMBLY</text>
<text x="987.6" y="613.4" font-size="12.3" text-anchor="start" >RIGHT</text>
<text x="987.6" y="628" font-size="12.3" text-anchor="start" >REAR</text>
<text x="987.6" y="642.6" font-size="12.3" text-anchor="start" >LAMP</text>
<text x="987.6" y="657.2" font-size="12.3" text-anchor="start" >ASSEMBLY</text>
<rect x="1069.5" y="604.5" width="85.5" height="106" fill="none" stroke="#000"/>
<path d="M1105.1 600.9 L1108.3 597.3 L1116.7 597.3 L1119.9 600.9" stroke="#000" stroke-width="1" fill="none" />
<text x="1105.3" y="591.6" font-size="12.3" text-anchor="end" >1</text>
<text transform="translate(1106.8 570) rotate(-90)" font-size="12.3">BRN/WHT</text>
<path d="M1106.5 611.5 L1112.5 605.3 L1118.5 611.5" stroke="#000" stroke-width="1" fill="none" />
<line x1="1112.5" y1="605.3" x2="1112.5" y2="634.2" stroke="#000" stroke-width="1" />
<path d="M1106.5 639.5 L1112.5 634 L1118.5 639.5 Z" stroke="#000" stroke-width="1" fill="none" />
<circle cx="1112.5" cy="657.5" r="18" fill="none" stroke="#000"/>
<path d="M1107.5 645.8 L1112.5 639.8 L1118.3 645.8" stroke="#000" stroke-width="1" fill="none" />
<path d="M1112.5 639.8 L1112.5 647.1 C1108.5 647.1 1106.5 649.5 1106.5 654 L1106.5 660 C1106.5 664.5 1109 665.9 1112.5 667.3 L1112.5 675.3" stroke="#000" stroke-width="1" fill="none" />
<path d="M1107.5 668.8 L1112.5 675.3 L1118.5 668.8" stroke="#000" stroke-width="1" fill="none" />
<ellipse cx="1113.5" cy="657.5" rx="4.6" ry="2.1" fill="none" stroke="#000" stroke-width="1.25" shape-rendering="geometricPrecision"/>
<path d="M1106.5 675.5 L1118.5 675.5 L1112.5 681 Z" stroke="#000" stroke-width="1" fill="none" />
<line x1="1112.5" y1="681.2" x2="1112.5" y2="710.3" stroke="#000" stroke-width="1" />
<path d="M1106.5 704.4 L1112.5 710.3 L1118.5 704.4" stroke="#000" stroke-width="1" fill="none" />
<path d="M1105.1 715.6 L1108.3 718.6 L1116.7 718.6 L1119.9 715.6" stroke="#000" stroke-width="1" fill="none" />
<rect x="1110.9" y="718.6" width="3" height="133.4" fill="#303030"/>
<text x="1106.7" y="732.8" font-size="12.3" text-anchor="end" >2</text>
<text transform="translate(1107.2 766.2) rotate(-90)" font-size="12.3">BLK</text>
<text transform="translate(1107.2 847.3) rotate(-90)" font-size="12.3">BLK</text>
<rect x="1231.5" y="604.5" width="85.5" height="106" fill="none" stroke="#000"/>
<path d="M1267.1 600.9 L1270.3 597.3 L1278.7 597.3 L1281.9 600.9" stroke="#000" stroke-width="1" fill="none" />
<text transform="translate(1268.8 570) rotate(-90)" font-size="12.3">BRN/WHT</text>
<path d="M1268.5 611.5 L1274.5 605.3 L1280.5 611.5" stroke="#000" stroke-width="1" fill="none" />
<line x1="1274.5" y1="605.3" x2="1274.5" y2="634.2" stroke="#000" stroke-width="1" />
<path d="M1268.5 639.5 L1274.5 634 L1280.5 639.5 Z" stroke="#000" stroke-width="1" fill="none" />
<circle cx="1274.5" cy="657.5" r="18" fill="none" stroke="#000"/>
<path d="M1269.5 645.8 L1274.5 639.8 L1280.3 645.8" stroke="#000" stroke-width="1" fill="none" />
<path d="M1274.5 639.8 L1274.5 647.1 C1270.5 647.1 1268.5 649.5 1268.5 654 L1268.5 660 C1268.5 664.5 1271 665.9 1274.5 667.3 L1274.5 675.3" stroke="#000" stroke-width="1" fill="none" />
<path d="M1269.5 668.8 L1274.5 675.3 L1280.5 668.8" stroke="#000" stroke-width="1" fill="none" />
<ellipse cx="1275.5" cy="657.5" rx="4.6" ry="2.1" fill="none" stroke="#000" stroke-width="1.25" shape-rendering="geometricPrecision"/>
<path d="M1268.5 675.5 L1280.5 675.5 L1274.5 681 Z" stroke="#000" stroke-width="1" fill="none" />
<line x1="1274.5" y1="681.2" x2="1274.5" y2="710.3" stroke="#000" stroke-width="1" />
<path d="M1268.5 704.4 L1274.5 710.3 L1280.5 704.4" stroke="#000" stroke-width="1" fill="none" />
<path d="M1267.1 715.6 L1270.3 718.6 L1278.7 718.6 L1281.9 715.6" stroke="#000" stroke-width="1" fill="none" />
<rect x="1272.9" y="718.6" width="3" height="133.4" fill="#303030"/>
<text transform="translate(1269.2 766.2) rotate(-90)" font-size="12.3">BLK</text>
<text transform="translate(1269.2 847.3) rotate(-90)" font-size="12.3">BLK</text>
<text x="1161" y="613.2" font-size="12.3" text-anchor="start" >LEFT</text>
<text x="1161" y="628" font-size="12.3" text-anchor="start" >LICENSE</text>
<text x="1161" y="642.8" font-size="12.3" text-anchor="start" >PLATE</text>
<text x="1161" y="657.6" font-size="12.3" text-anchor="start" >LAMP</text>
<circle cx="1112" cy="860" r="4.15" fill="#000"/>
<line x1="1104" y1="864.5" x2="1121" y2="864.5" stroke="#000" stroke-width="1" />
<line x1="1107" y1="867.5" x2="1118" y2="867.5" stroke="#000" stroke-width="1" />
<line x1="1110" y1="871.5" x2="1114" y2="871.5" stroke="#000" stroke-width="1" />
<line x1="1116" y1="860.5" x2="1125" y2="860.5" stroke="#000" stroke-width="1" />
<line x1="1131.4" y1="860.5" x2="1262" y2="860.5" stroke="#000" stroke-width="1" stroke-dasharray="13 5.85"/>
<text x="108.5" y="952.7" font-size="12.3" text-anchor="start" >204783</text>
</svg>
</div>
<!-- scrollbar -->
<div id="vs" class="abs">
 <div class="sbtn" style="top:0"><i style="top:5px;border-bottom:4px solid #808080"></i></div>
 <div class="sbtn" style="top:875px"><i style="top:6px;border-top:4px solid #808080"></i></div>
</div>
<div class="abs" style="left:1275px;top:387px;width:5px;height:140px;background:#e4e2dc"></div>
<div class="abs" style="left:1277px;top:389px;width:3px;height:19px;background:#808080"></div>
<div class="abs" style="left:1277px;top:408px;width:3px;height:117px;background:#c8c6be"></div>
<div class="abs" style="left:1275px;top:525px;width:5px;height:2px;background:#808080"></div>
<!-- status bar -->
<div id="status" class="abs">
 <span class="abs" style="left:2px;top:4px;height:14px;line-height:14px">Ready</span>
 <div class="pane" style="left:1191px;width:26px"></div>
 <div class="pane" style="left:1219px;width:27px"><span class="abs" style="left:1px;top:1px;height:13px;line-height:13px;letter-spacing:-0.4px">NUM</span></div>
 <div class="pane" style="left:1249px;width:31px"></div>
</div>
</body></html>
